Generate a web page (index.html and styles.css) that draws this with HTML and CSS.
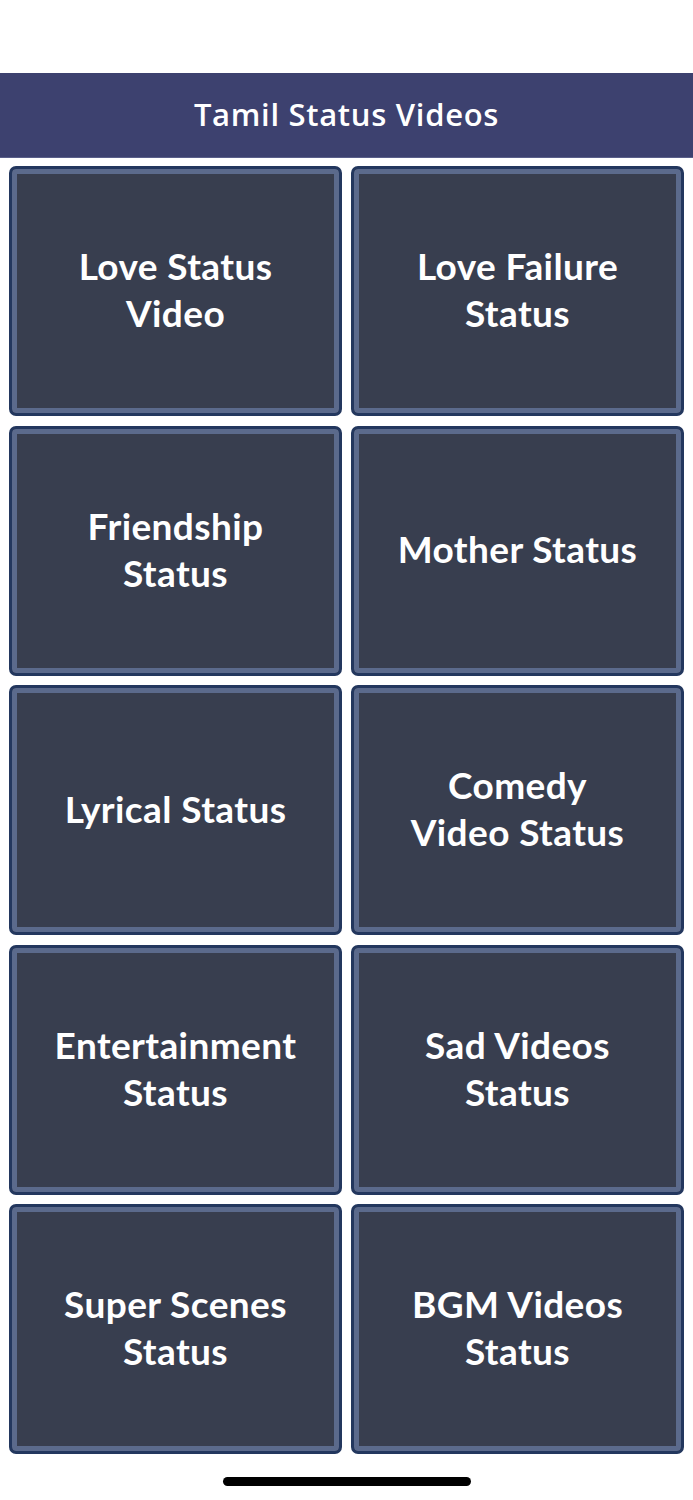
FILE: index.html
```html
<!DOCTYPE html>
<html lang="en">
<head>
    <meta charset="UTF-8">
    <title>Tamil Status Videos</title>
    <link rel="stylesheet" href="styles.css">
</head>
<body>
    <div class="status-bar"></div>

    <!-- Title bar -->
    <header class="app-header">
        <h1>Tamil Status Videos</h1>
    </header>

    <!-- Category tiles -->
    <main class="grid">
        <a class="tile" href="#">Love Status<br>Video</a>
        <a class="tile" href="#">Love Failure<br>Status</a>
        <a class="tile" href="#">Friendship<br>Status</a>
        <a class="tile" href="#">Mother Status</a>
        <a class="tile" href="#">Lyrical Status</a>
        <a class="tile" href="#">Comedy<br>Video Status</a>
        <a class="tile" href="#">Entertainment<br>Status</a>
        <a class="tile" href="#">Sad Videos<br>Status</a>
        <a class="tile" href="#">Super Scenes<br>Status</a>
        <a class="tile" href="#">BGM Videos<br>Status</a>
    </main>

    <div class="home-indicator"></div>
</body>
</html>
```

FILE: styles.css
```css
body { margin: 0; background: #fff; font-family: "Lato", "Open Sans", sans-serif; }
.status-bar { height: 73px; }

.app-header { height: 84px; background-color: #3d416f; border-bottom: 1px solid #5a5f8a; display: flex; align-items: center; justify-content: center; }
.app-header h1 { margin: 0 0 2px; color: #fff; font-family: "Open Sans", sans-serif; font-weight: 600; font-size: 31px; letter-spacing: 0.7px; }

.grid { display: grid; grid-template-columns: 1fr 1fr; grid-auto-rows: 250px; gap: 9.5px 9px; padding: 8px 9px 0; }
.tile { display: flex; align-items: center; justify-content: center; text-align: center; text-decoration: none; color: #fff; font-weight: 700; font-size: 37px; letter-spacing: 0.4px; line-height: 47px; padding-bottom: 4px; box-sizing: border-box; background-color: #383e4f; border: 3px solid #23375e; border-radius: 7px; box-shadow: inset 0 0 0 5px #5b6a8c; }

.home-indicator { width: 248px; height: 9px; background: #000; border-radius: 5px; margin: 23px auto 0; }
```
